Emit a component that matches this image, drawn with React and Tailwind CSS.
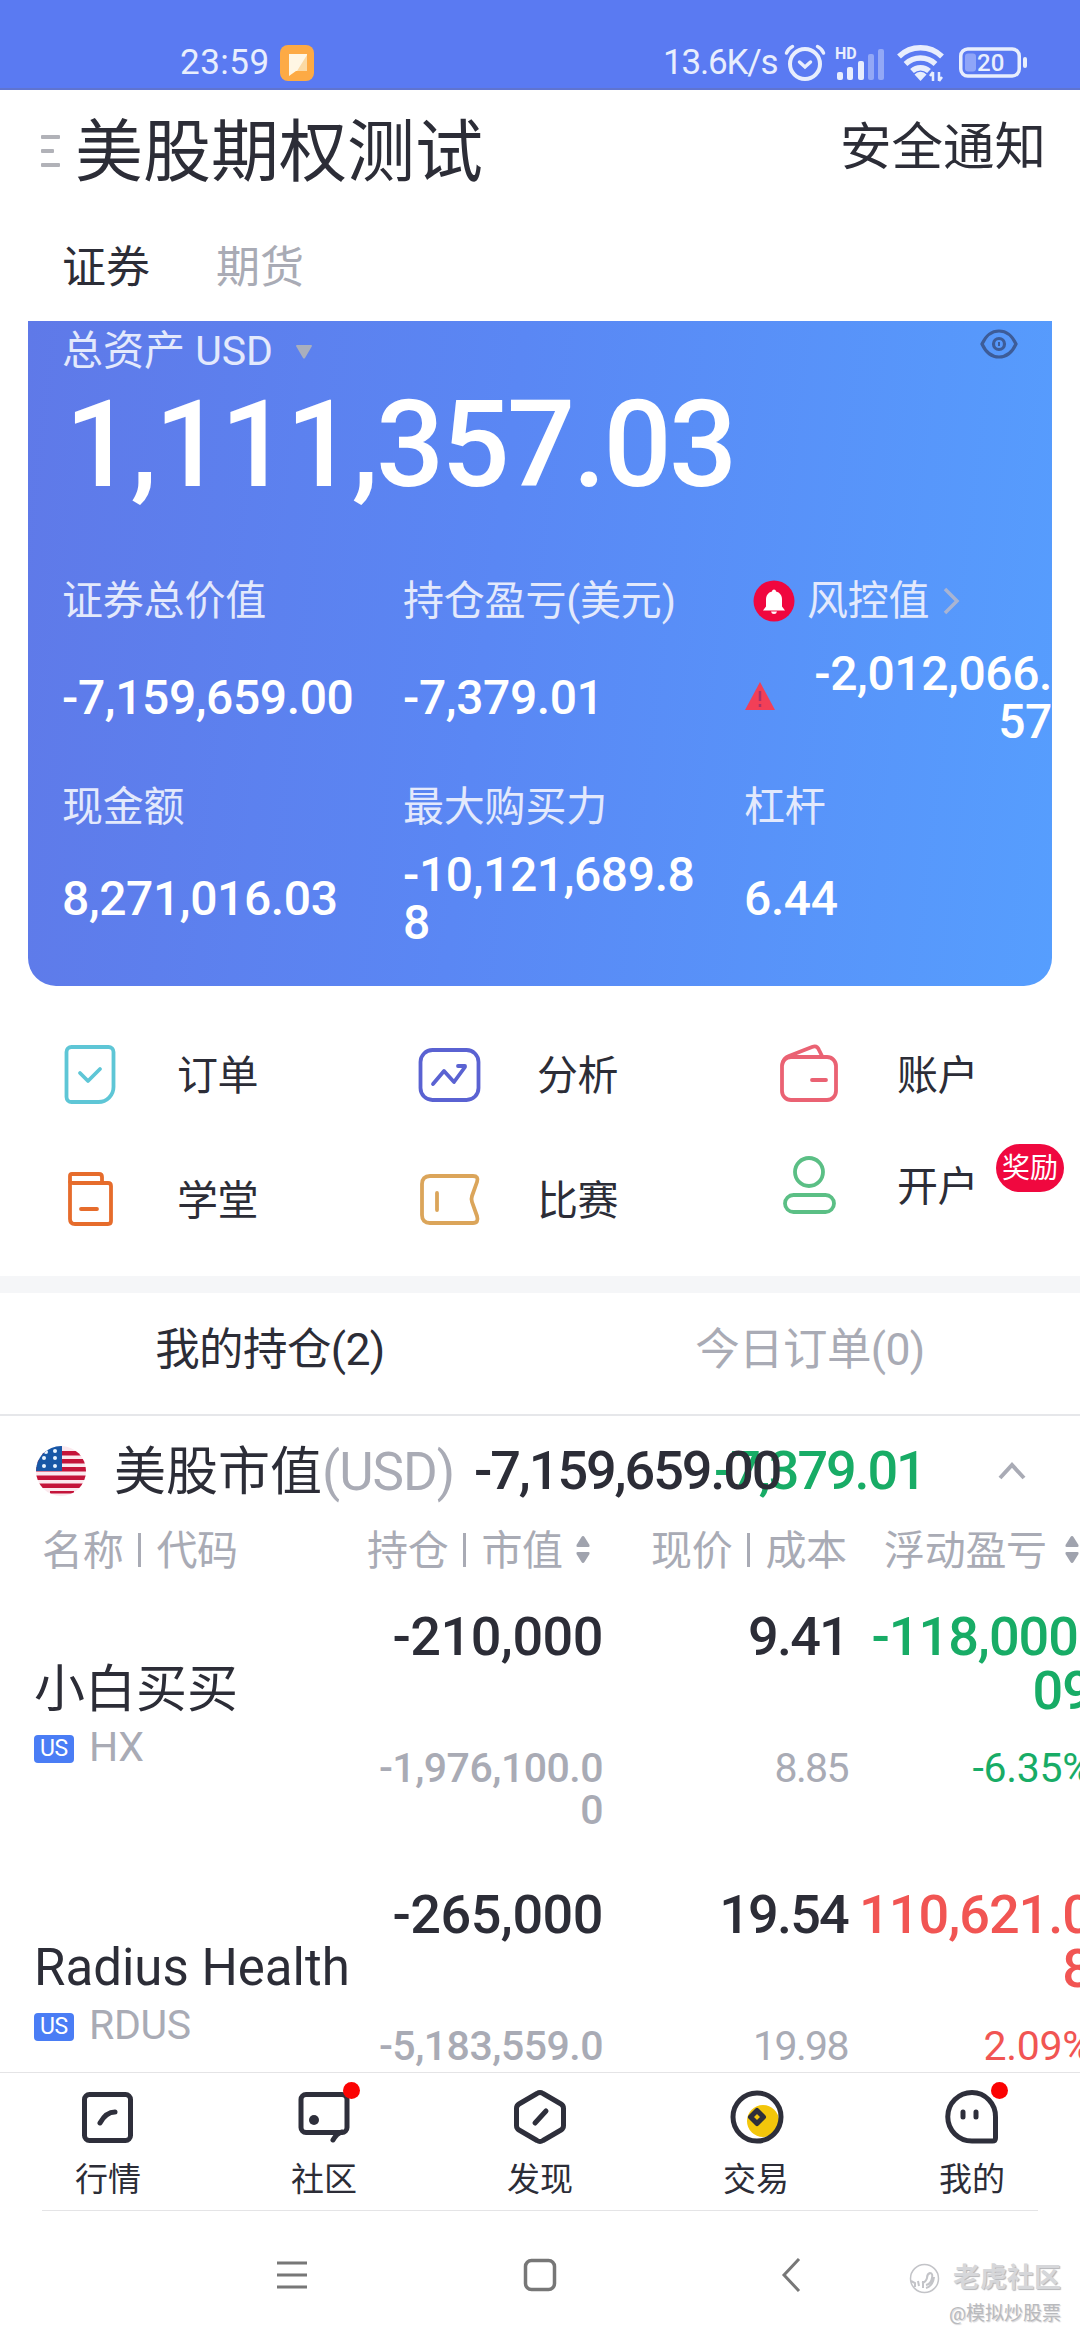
import React from "react";
import clsx from "clsx";

const assetStats = [
    { label: "证券总价值", lines: ["-7,159,659.00"] },
    { label: "持仓盈亏(美元)", lines: ["-7,379.01"] },
    { label: "风控值", lines: ["-2,012,066.", "57"], alert: true },
    { label: "现金额", lines: ["8,271,016.03"] },
    { label: "最大购买力", lines: ["-10,121,689.8", "8"] },
    { label: "杠杆", lines: ["6.44"] },
];

const positions = [
    {
        name: "小白买买",
        code: "HX",
        amount: "-210,000",
        value: ["-1,976,100.0", "0"],
        price: "9.41",
        cost: "8.85",
        profit: ["-118,000.", "09"],
        rate: "-6.35%",
        color: "text-[#18ac66]",
    },
    {
        name: "Radius Health",
        code: "RDUS",
        amount: "-265,000",
        value: ["-5,183,559.0", "0"],
        price: "19.54",
        cost: "19.98",
        profit: ["110,621.0", "8"],
        rate: "2.09%",
        color: "text-[#f15553]",
    },
];

const Lines = ({ lines }) =>
    lines.map((line, index) => (
        <span key={index} className="block">
            {line}
        </span>
    ));

const StatusBar = () => (
    <div className="flex h-[90px] items-center border-b-2 border-[#5f74d0] bg-[#5a7af2] pl-[180px] pt-[37px] text-[35px] leading-none text-[#e8eefd]">
        <span className="w-[100px] tracking-[0.500px]">23:59</span>
        <svg width="34" height="36" viewBox="0 0 34 36">
            <rect width="34" height="36" rx="8" fill="#fdaa45" />
            <path d="M9 9h18v17H16l-7 5z" fill="#fff6e4" />
            <path d="M27 10v16H17z" fill="#fbd9a4" />
        </svg>
        <span className="ml-[349px] w-[120px] tracking-[-1.200px]">13.6K/s</span>
        <svg className="ml-[1px]" width="42" height="38" viewBox="0 0 42 38" fill="none" stroke="#e8eefd" strokeWidth="4" strokeLinecap="round">
            <circle cx="21" cy="20" r="15" />
            <path d="M2.500 9c1-3 3-5 6-6.500M39.500 9c-1-3-3-5-6-6.500" strokeWidth="3.500" />
            <path d="M15.500 18l5.500 5 5.500-5" strokeWidth="3.500" />
        </svg>
        <svg className="ml-[8px]" width="52" height="38" viewBox="0 0 52 38" fill="#e8eefd">
            <text x="1" y="15" fontSize="16" fontWeight="700">HD</text>
            <rect x="3" y="28" width="6" height="8" rx="2" />
            <rect x="13" y="23" width="6" height="13" rx="2" />
            <rect x="24" y="17" width="6" height="19" rx="2" />
            <rect x="34" y="10" width="6" height="26" rx="2" opacity=".4" />
            <rect x="44" y="5" width="6" height="31" rx="2" opacity=".4" />
        </svg>
        <svg className="ml-[11px]" width="50" height="38" viewBox="0 0 50 38" fill="none" stroke="#e8eefd" strokeWidth="5.500">
            <path d="M2 12.500a31 31 0 0 1 43 0" />
            <path d="M8.500 20a22 22 0 0 1 30 0" />
            <path d="M15 27a12.500 12.500 0 0 1 17 0" />
            <path d="M17.500 30.500a8 8 0 0 1 12 0L23.500 37z" fill="#e8eefd" stroke="none" />
            <path d="M36 28v9M42 28v9M36 28l-3 4M42 37l3-4" strokeWidth="2.500" />
        </svg>
        <svg className="ml-[12px]" width="70" height="32" viewBox="0 0 70 32">
            <rect x="1.750" y="2" width="58.500" height="27" rx="7" fill="none" stroke="#e8eefd" strokeWidth="3.500" />
            <rect x="6" y="6.500" width="11" height="18" rx="3" fill="#8fa5f8" />
            <rect x="64" y="10" width="4" height="11" rx="2" fill="#e8eefd" />
            <text x="18" y="24" fontSize="24" fontWeight="500" fill="#e8eefd">20</text>
        </svg>
    </div>
);

const Header = () => (
    <div>
        <div className="flex h-[122px] items-center px-[41px] leading-none text-[#2c2d37]">
            <svg width="20" height="34" viewBox="0 0 20 34" fill="#b1b2b8">
                <rect y="1" width="19" height="4" rx="1" />
                <rect y="15" width="13" height="4" rx="1" />
                <rect y="29" width="19" height="4" rx="1" />
            </svg>
            <span className="ml-[14px] mt-[3px] text-[68px]">美股期权测试</span>
            <span className="-mr-[7px] mb-[6px] ml-auto text-[51.500px]">安全通知</span>
        </div>
        <div className="flex h-[109px] items-center gap-[66px] pl-[62px] pt-[2px] text-[44px] leading-none">
            <span className="text-[#2c2d37]">证券</span>
            <span className="text-[#a9abb5]">期货</span>
        </div>
    </div>
);

const AssetCard = () => (
    <div className="mx-[28px] h-[665px] rounded-b-[28px] bg-[linear-gradient(97deg,#5f79e8_0%,#5a87f4_45%,#569efe_100%)] pl-[34px] leading-none text-white">
        <div className="flex h-[58px] items-center pt-[2px] text-[41px] text-[#e3e9fc]">
            <span>总资产 USD</span>
            <svg className="ml-[23px] mt-[2px]" width="16" height="14" viewBox="0 0 16 14">
                <path d="M0 1q0-1 1-1h14q1 0 1 1L9 13q-1 1-2 0z" fill="#a9afbd" />
            </svg>
            <svg className="ml-auto mr-[34px] mb-[14px]" width="38" height="30" viewBox="0 0 38 30" fill="none" stroke="#3d5c98" strokeWidth="3.200">
                <path d="M2 15Q8 2 19 2T36 15Q30 28 19 28T2 15z" />
                <circle cx="19" cy="15" r="5.500" />
                <path d="M19 13v4" strokeWidth="2" />
            </svg>
        </div>
        <div className="flex h-[132px] items-center pl-[3px] text-[120px] font-medium tracking-[-2.600px]">
            1,111,357.03
        </div>
        <div className="mt-[60px] grid grid-cols-[341px_341px_308px] grid-rows-[206px_196px]">
            {assetStats.map((stat) => (
                <div key={stat.label} className="grid grid-rows-[60px_1fr]">
                    <div className="flex items-center text-[41px] tracking-[-0.200px] text-[#e3e9fc]">
                        {stat.alert && (
                            <svg className="ml-[9px] mr-[12px]" width="42" height="42" viewBox="0 0 42 42">
                                <circle cx="21" cy="21" r="20.500" fill="#f0073f" />
                                <path d="M21 9.500c1 0 2 .8 2 2 4 1 6 4 6 8v7l3 4H10l3-4v-7c0-4 2-7 6-8 0-1.200 1-2 2-2z" fill="#fff" />
                                <path d="M18 31.500h6q-.5 2.500-3 2.500t-3-2.500z" fill="#fff" />
                            </svg>
                        )}
                        <span>{stat.label}</span>
                        {stat.alert && (
                            <svg className="ml-[14px]" width="18" height="28" viewBox="0 0 18 28" fill="none" stroke="#a9b4d2" strokeWidth="3.500">
                                <path d="M2 2l12 12L2 26" />
                            </svg>
                        )}
                    </div>
                    <div className="flex items-center pb-[12px] text-[48px] font-medium leading-[48px] tracking-[-0.400px]">
                        {stat.alert && (
                            <svg className="mb-[5px]" width="32" height="30" viewBox="0 0 32 30">
                                <path d="M16 1l15 28H1z" fill="#f23f57" />
                                <path d="M16 10v10M16 23v3" stroke="#a83268" strokeWidth="2.500" />
                            </svg>
                        )}
                        <div className={clsx(stat.alert && "ml-auto text-right")}>
                            <Lines lines={stat.lines} />
                        </div>
                    </div>
                </div>
            ))}
        </div>
    </div>
);

const shortcutIcon = "h-[64px] w-[64px] fill-none stroke-[3.8]";

const shortcuts = [
    {
        label: "订单",
        icon: (
            <svg viewBox="0 0 64 64" className={shortcutIcon} stroke="#5ec6d6" strokeLinecap="round" strokeLinejoin="round">
                <path d="M13.500 4h37a5 5 0 0 1 5 5v35a15 15 0 0 1-15 15h-27a5 5 0 0 1-5-5V9a5 5 0 0 1 5-5z" />
                <path d="M22 30l8 8 12-12" />
            </svg>
        ),
    },
    {
        label: "分析",
        icon: (
            <svg viewBox="0 0 64 64" className={shortcutIcon} stroke="#5a62d2" strokeLinecap="round" strokeLinejoin="round">
                <rect x="2.500" y="7" width="58" height="50" rx="12" />
                <path d="M15 41l11-13 10 11 11-15M40 23h7" />
            </svg>
        ),
    },
    {
        label: "账户",
        icon: (
            <svg viewBox="0 0 64 64" className={shortcutIcon} stroke="#ea6273" strokeLinecap="round" strokeLinejoin="round">
                <rect x="4" y="14" width="54" height="43" rx="9" />
                <path d="M5 19q1-4 6-6L34 4q5-2 7 3l3 6M34 37h14" />
            </svg>
        ),
    },
    {
        label: "学堂",
        icon: (
            <svg viewBox="0 0 64 64" className={shortcutIcon} stroke="#e66c2c" strokeLinecap="round" strokeLinejoin="round">
                <path d="M12 14V8q0-2 2-2h27q3 0 3 3v6h6q3 0 3 3v35q0 3-3 3H17q-5 0-5-5z" />
                <path d="M12 14q1 1 3 1h29M23 41h16" />
            </svg>
        ),
    },
    {
        label: "比赛",
        icon: (
            <svg viewBox="0 0 64 64" className={shortcutIcon} stroke="#dba55a" strokeLinecap="round" strokeLinejoin="round">
                <path d="M12 8h43q6 0 4 6l-5 14q-1 3 0 6l5 14q2 7-4 7H12q-8 0-8-8V16q0-8 8-8z" />
                <path d="M19 25v17" />
            </svg>
        ),
    },
    {
        label: "开户",
        badge: "奖励",
        icon: (
            <svg viewBox="0 0 64 64" className={shortcutIcon} stroke="#5bbf85" strokeLinecap="round" strokeLinejoin="round">
                <circle cx="31" cy="18" r="14" />
                <rect x="7" y="41" width="49" height="17" rx="8.500" />
            </svg>
        ),
    },
];

const Shortcuts = () => (
    <div className="grid h-[290px] grid-cols-3 grid-rows-[178px_72px] text-[41px] leading-none text-[#2c2d37]">
        {shortcuts.map((item) => (
            <div key={item.label} className={clsx("relative flex items-center pl-[58px]", item.badge && "pb-[28px]")}>
                {item.icon}
                <span className="ml-[55px] mt-[3px] tracking-[-0.500px]">{item.label}</span>
                {item.badge && (
                    <span className="absolute -top-[20px] right-[16px] flex h-[48px] w-[68px] items-center justify-center rounded-full bg-[#f0083f] pt-[2px] text-[28px] text-white">
                        {item.badge}
                    </span>
                )}
            </div>
        ))}
    </div>
);

const SortIcon = ({ className }) => (
    <svg className={clsx("shrink-0", className)} width="14" height="27" viewBox="0 0 14 27" fill="#a0a3ae">
        <path d="M7 0q1 0 1.500 1L13.500 9q.5 2-1 2h-11Q0 11 .5 9l5-8Q6 0 7 0z" />
        <path d="M7 27q1 0 1.500-1l5-8q.5-2-1-2h-11q-1.500 0-1 2l5 8q.5 1 1.500 1z" />
    </svg>
);

const FlagIcon = () => (
    <svg width="50" height="50" viewBox="0 0 50 50">
        <clipPath id="flag">
            <circle cx="25" cy="25" r="25" />
        </clipPath>
        <g clipPath="url(#flag)">
            <rect width="50" height="50" fill="#fbe9ee" />
            {[5, 13, 21, 29.500, 37.500].map((y) => (
                <rect key={y} y={y} width="50" height="4.500" fill="#c4143a" />
            ))}
            <rect x="14" y="45" width="24" height="2.500" fill="#c4143a" />
            <rect width="26" height="25" fill="#1857a6" />
            {[[10, 6], [19, 5], [8, 12], [19, 12], [8, 20], [19, 20]].map(([x, y]) => (
                <circle key={`${x}-${y}`} cx={x} cy={y} r="2" fill="#e9f4ff" />
            ))}
        </g>
    </svg>
);

const Divider = () => <i className="mx-[15px] mb-[2px] h-[34px] w-[3px] bg-[#a9abb5]" />;

const Holdings = () => (
    <div>
        <div className="h-[17px] bg-[#f5f6f8]" />
        <div className="flex h-[123px] border-b-2 border-[#e6e7ea] pb-[7px] text-[44.500px] leading-none tracking-[-0.600px]">
            <span className="flex flex-1 items-center justify-center text-[#2c2d37]">我的持仓(2)</span>
            <span className="flex flex-1 items-center justify-center text-[#a9abb5]">今日订单(0)</span>
        </div>
        <div className="relative flex h-[110px] items-center pl-[36px] leading-none">
            <FlagIcon />
            <span className="ml-[28px] mt-[3px] text-[52px] text-[#2c2d37]">美股市值</span>
            <span className="mt-[2px] text-[53px] tracking-[-1px] text-[#a9abb5]">(USD)</span>
            <span className="absolute left-[714px] text-[54px] font-medium tracking-[-2.100px] text-[#18ac66]">-7,379.01</span>
            <span className="absolute left-[474px] text-[54px] font-medium tracking-[-2.100px] text-[#2c2d37]">-7,159,659.00</span>
            <svg className="ml-auto mr-[54px]" width="28" height="18" viewBox="0 0 28 18" fill="none" stroke="#a9abb5" strokeWidth="4">
                <path d="M2 16L14 3l12 13" />
            </svg>
        </div>
        <div className="flex h-[54px] items-center overflow-hidden whitespace-nowrap pb-[4px] pl-[42px] text-[41px] leading-none tracking-[-0.300px] text-[#a9abb5]">
            <span className="flex w-[325px] items-center">名称<Divider />代码</span>
            <span className="flex w-[284px] items-center">持仓<Divider />市值<SortIcon className="mb-[4px] ml-[13px]" /></span>
            <span className="flex w-[233px] items-center">现价<Divider />成本</span>
            <span>浮动盈亏</span>
            <SortIcon className="mb-[4px] ml-[18px]" />
        </div>
        <div className="h-[491px] overflow-hidden">
            {positions.map((item) => (
                <div key={item.code} className="grid h-[278px] grid-cols-[358px_245px_245px_244px] text-right text-[54px] font-medium leading-[54px] text-[#2c2d37]">
                    <div className="whitespace-nowrap pl-[34px] pt-[79px] text-left font-normal">
                        <div className="flex h-[60px] items-center pt-[2px] text-[51px]">{item.name}</div>
                        <div className="flex h-[56px] items-center text-[41px] tracking-[-0.300px] text-[#a9abb5]">
                            <span className="mr-[15px] mt-[3px] flex h-[28px] w-[40px] items-center justify-center rounded-[4px] bg-[#4a7df5] text-[23px] text-white">
                                US
                            </span>
                            {item.code}
                        </div>
                    </div>
                    <div className="pt-[30px]">
                        <div className="h-[137px] tracking-[-0.500px]">{item.amount}</div>
                        <div className="text-[41px] leading-[42px] tracking-[-0.500px] text-[#a9abb5]">
                            <Lines lines={item.value} />
                        </div>
                    </div>
                    <div className="pt-[30px]">
                        <div className="h-[137px] tracking-[-1.800px]">{item.price}</div>
                        <div className="text-[41px] font-normal leading-[42px] tracking-[-1.600px]">
                            <span className="text-[#a9abb5]">{item.cost}</span>
                        </div>
                    </div>
                    <div className={clsx("pt-[30px]", item.color)}>
                        <div className="h-[137px] tracking-[-1px]">
                            <Lines lines={item.profit} />
                        </div>
                        <div className="text-[41px] font-normal leading-[42px] tracking-[-0.300px]">{item.rate}</div>
                    </div>
                </div>
            ))}
        </div>
    </div>
);

const tabIcon = "h-[60px] w-[60px] fill-none stroke-[5]";

const tabs = [
    {
        label: "行情",
        icon: (
            <svg viewBox="0 0 60 60" className={tabIcon} stroke="#2e2f3b" strokeLinecap="round">
                <rect x="6.500" y="7.500" width="46" height="46" rx="5" />
                <path d="M22 36q6-11 15-11" />
            </svg>
        ),
    },
    {
        label: "社区",
        dot: "left-[127px]",
        icon: (
            <svg viewBox="0 0 60 60" className={tabIcon} stroke="#2e2f3b" strokeLinecap="round">
                <rect x="7" y="7.500" width="46" height="38" rx="5" />
                <path d="M48 45q-5 1-9 8" />
                <circle cx="20" cy="33" r="5" fill="#2e2f3b" stroke="none" />
            </svg>
        ),
    },
    {
        label: "发现",
        icon: (
            <svg viewBox="0 0 60 60" className={tabIcon} stroke="#2e2f3b" strokeLinecap="round" strokeLinejoin="round">
                <path d="M27 6.500q3-2 6 0L51 17q2.500 1.500 2.500 4.500v17q0 3-2.500 4.500L33 53.500q-3 2-6 0L9 43q-2.500-1.500-2.500-4.500v-17q0-3 2.500-4.500z" />
                <path d="M25 36l11-12" />
            </svg>
        ),
    },
    {
        label: "交易",
        icon: (
            <svg viewBox="0 0 60 60" className={tabIcon} stroke="#2e2f3b" strokeLinejoin="round">
                <circle cx="37" cy="34" r="16" fill="#f3c60b" stroke="none" />
                <circle cx="31" cy="30" r="24" />
                <path d="M31 23.500l6.500 6.500-6.500 6.500-6.500-6.500z" />
            </svg>
        ),
    },
    {
        label: "我的",
        dot: "left-[127px]",
        icon: (
            <svg viewBox="0 0 60 60" className={tabIcon} stroke="#2e2f3b" strokeLinecap="round" strokeLinejoin="round">
                <path d="M30 5.500A23.500 24 0 0 1 53.500 30v21q0 3-3 3H30A24 24 0 0 1 30 5.500z" />
                <path d="M21 25v5M34 25v5" />
            </svg>
        ),
    },
];

const TabBar = () => (
    <div className="mt-px border-t border-[#e4e4e6]">
        <div className="flex h-[137px]">
            {tabs.map((tab) => (
                <div key={tab.label} className="relative flex flex-1 flex-col items-center pt-[14px] text-[33px] leading-none text-[#2c2d37]">
                    {tab.icon}
                    <span className="mt-[16px]">{tab.label}</span>
                    {tab.dot && <i className={clsx("absolute top-[9px] h-[17px] w-[17px] rounded-full bg-[#fb0303]", tab.dot)} />}
                </div>
            ))}
        </div>
        <div className="mx-[42px] h-px bg-[#e4e4e6]" />
    </div>
);

const SystemNav = () => (
    <div className="relative flex h-[128px] items-center pl-[276px]">
        <svg width="32" height="34" viewBox="0 0 32 34" stroke="#777777" strokeWidth="3">
            <path d="M1 5h30M1 17h30M1 29h30" />
        </svg>
        <svg className="ml-[215px]" width="34" height="34" viewBox="0 0 34 34" fill="none" stroke="#777777" strokeWidth="3.500">
            <rect x="2.500" y="2.500" width="29" height="29" rx="6" />
        </svg>
        <svg className="ml-[224px]" width="20" height="34" viewBox="0 0 20 34" fill="none" stroke="#777777" strokeWidth="3">
            <path d="M18 1L3 17l15 16" />
        </svg>
        <div className="absolute right-[19px] top-[52px] flex flex-col items-end leading-none">
            <div className="flex items-center gap-[13px] text-[27px] font-bold text-[#d6d7da] [text-shadow:1px_1px_1px_#b4b5b9]">
                <svg width="31" height="31" viewBox="0 0 31 31" fill="none" stroke="#c3c4c8" strokeWidth="1.500">
                    <circle cx="15.500" cy="15.500" r="14" />
                    <path d="M2 18l4 2v4M9 18l1 5M14 18v7M17 22q5-1 6-7 1-5-2-5-3 1-3 5-1 4-5 5M17 25q7-2 8-11" strokeWidth="2" />
                </svg>
                老虎社区
            </div>
            <span className="mt-[10px] text-[19px] text-[#b9babd] [text-shadow:1px_1px_1px_#d5d5d8]">@模拟炒股票</span>
        </div>
    </div>
);

const App = () => {
    return (
        <div className="h-[2340px] w-[1080px] overflow-hidden bg-white font-['Roboto','Noto_Sans_CJK_SC',sans-serif]">
            <StatusBar />
            <Header />
            <AssetCard />
            <Shortcuts />
            <Holdings />
            <TabBar />
            <SystemNav />
        </div>
    );
};

export default App;
